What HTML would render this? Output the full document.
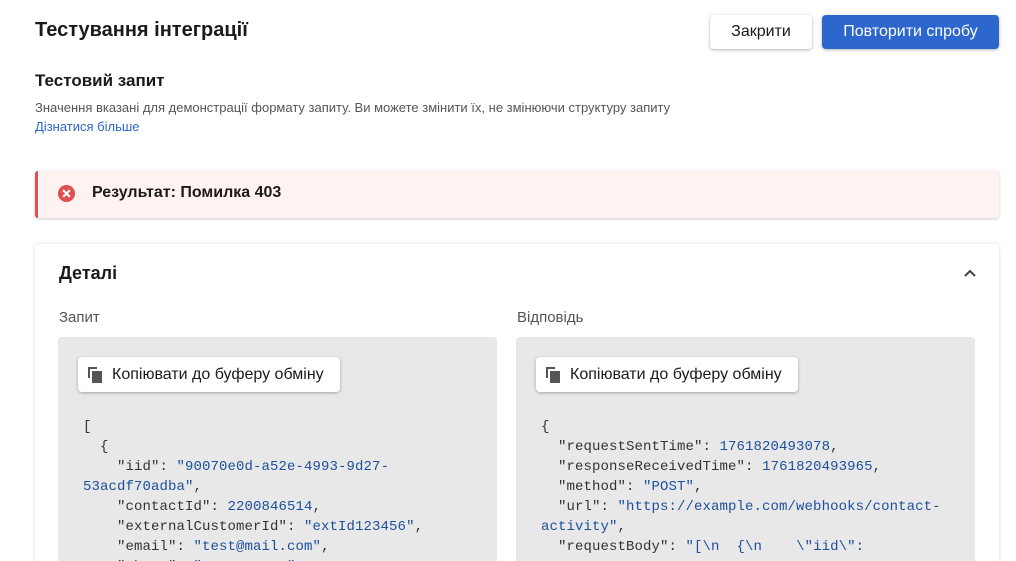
<!DOCTYPE html>
<html><head><meta charset="utf-8"><style>
*{box-sizing:border-box;margin:0;padding:0}
html,body{width:1016px;height:561px;overflow:hidden}
body{background:#fff;font-family:"Liberation Sans",sans-serif;color:#1a1a1a;position:relative}
.abs{position:absolute}
h1{position:absolute;left:35px;top:19px;font-size:20px;font-weight:bold}
.btn{position:absolute;top:15px;height:34px;border-radius:4px;font-size:16px;display:flex;align-items:center;justify-content:center;box-shadow:0 1px 3px rgba(0,0,0,.3)}
.alert{position:absolute;left:35px;top:171px;width:964px;height:47px;background:#fff3f2;border-left:3px solid #e05050;border-radius:3px;box-shadow:0 1px 3px rgba(0,0,0,.2)}
.card{position:absolute;left:35px;top:244px;width:964px;height:330px;background:#fff;border-radius:4px;box-shadow:0 0 4px rgba(0,0,0,.15)}
.panel{position:absolute;top:337px;height:240px;background:#e8e8e8;border-radius:4px}
.copy{position:absolute;left:20px;top:20px;height:35px;background:#fff;border-radius:4px;box-shadow:0 1px 3px rgba(0,0,0,.3);font-size:16px;display:flex;align-items:center;padding:0 16px 0 10px}
.copy i{display:inline-block;width:14px;height:16px;position:relative;margin-right:10px}
pre{position:absolute;left:25px;top:80px;font-family:"Liberation Mono",monospace;font-size:14px;letter-spacing:0.1px;line-height:20px;white-space:pre-wrap;color:#333}
.v{color:#1d4f9c}
</style></head><body>
<h1>Тестування інтеграції</h1>
<div class="btn" style="left:710px;width:102px;background:#fff">Закрити</div>
<div class="btn" style="left:822px;width:177px;background:#2d66cc;color:#fff">Повторити спробу</div>
<div class="abs" style="left:35px;top:71px;font-size:17px;font-weight:bold">Тестовий запит</div>
<div class="abs" style="left:35px;top:100px;font-size:13px;color:#555">Значення вказані для демонстрації формату запиту. Ви можете змінити їх, не змінюючи структуру запиту</div>
<div class="abs" style="left:35px;top:119px;font-size:13px;color:#2d66cc">Дізнатися більше</div>
<div class="alert">
<svg class="abs" style="left:19px;top:13px" width="19" height="19" viewBox="0 0 20 20"><circle cx="10" cy="10" r="9" fill="#e05050"/><path d="M6.5 6.5l7 7M13.5 6.5l-7 7" stroke="#fff" stroke-width="2.2"/></svg>
<div class="abs" style="left:54px;top:13px;font-size:16px;font-weight:bold">Результат: Помилка 403</div>
</div>
<div class="card">
<div class="abs" style="left:24px;top:19px;font-size:18px;font-weight:bold">Деталі</div>
<svg class="abs" style="left:929px;top:25px" width="12" height="8" viewBox="0 0 12 8"><path d="M1 7l5-5 5 5" stroke="#444" stroke-width="2" fill="none"/></svg>
<div class="abs" style="left:24px;top:65px;font-size:15px;color:#555">Запит</div>
<div class="abs" style="left:482px;top:65px;font-size:15px;color:#555">Відповідь</div>
</div>
<div class="panel" style="left:58px;width:439px">
<div class="copy"><i><span class="abs" style="left:0;top:0;width:9px;height:11px;border-left:2px solid #555;border-top:2px solid #555"></span><span class="abs" style="left:4px;top:4px;width:10px;height:12px;background:#555"></span></i>Копіювати до буферу обміну</div>
<pre>[
  {
    "iid": <span class="v">"90070e0d-a52e-4993-9d27-53acdf70adba"</span>,
    "contactId": <span class="v">2200846514</span>,
    "externalCustomerId": <span class="v">"extId123456"</span>,
    "email": <span class="v">"test@mail.com"</span>,
    "phone": <span class="v">"+380000000"</span></pre>
</div>
<div class="panel" style="left:516px;width:459px">
<div class="copy"><i><span class="abs" style="left:0;top:0;width:9px;height:11px;border-left:2px solid #555;border-top:2px solid #555"></span><span class="abs" style="left:4px;top:4px;width:10px;height:12px;background:#555"></span></i>Копіювати до буферу обміну</div>
<pre style="width:418px">{
  "requestSentTime": <span class="v">1761820493078</span>,
  "responseReceivedTime": <span class="v">1761820493965</span>,
  "method": <span class="v">"POST"</span>,
  "url": <span class="v">"https://example.com/webhooks/contact-activity"</span>,
  "requestBody": <span class="v">"[\n  {\n    \"iid\":</span></pre>
</div>
</body></html>
